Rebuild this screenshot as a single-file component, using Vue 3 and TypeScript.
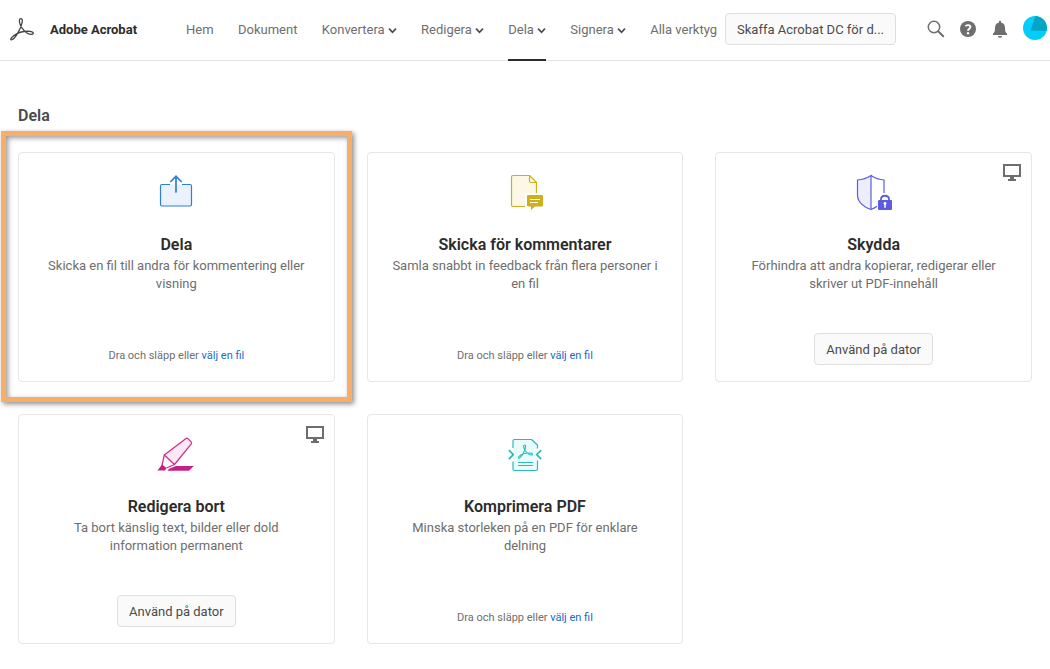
<script setup lang="ts">
interface NavItem {
  label: string
  menu?: boolean
  active?: boolean
}

interface Tool {
  icon: 'share' | 'comment' | 'protect' | 'redact' | 'compress'
  title: string
  text: string
  desktop?: boolean
  highlighted?: boolean
}

const navItems: NavItem[] = [
  { label: 'Hem' },
  { label: 'Dokument' },
  { label: 'Konvertera', menu: true },
  { label: 'Redigera', menu: true },
  { label: 'Dela', menu: true, active: true },
  { label: 'Signera', menu: true },
  { label: 'Alla verktyg' },
]

const tools: Tool[] = [
  { icon: 'share', title: 'Dela', text: 'Skicka en fil till andra för kommentering eller visning', highlighted: true },
  { icon: 'comment', title: 'Skicka för kommentarer', text: 'Samla snabbt in feedback från flera personer i en fil' },
  { icon: 'protect', title: 'Skydda', text: 'Förhindra att andra kopierar, redigerar eller skriver ut PDF-innehåll', desktop: true },
  { icon: 'redact', title: 'Redigera bort', text: 'Ta bort känslig text, bilder eller dold information permanent', desktop: true },
  { icon: 'compress', title: 'Komprimera PDF', text: 'Minska storleken på en PDF för enklare delning' },
]
</script>

<template>
  <div class="page">
    <header class="topbar">
      <a class="brand" href="#">
        <svg class="logo" viewBox="0 0 24 24" aria-hidden="true">
          <path d="M10.6.7C8.6 1 9.2 5.6 11.6 9.400C14 13 18 16.200 21 16.400C24.200 16.500 24 13.600 20 13.300C15 13 8 14.500 4 17.500C0 20.400 .2 22.300 1.900 21.700C5.500 20.300 11.900 9 12.300 3C12.400 1.200 11.700.5 10.600.7Z" />
        </svg>
        <span>Adobe Acrobat</span>
      </a>
      <nav class="nav">
        <a v-for="item in navItems" :key="item.label" href="#" :class="{ active: item.active }">
          {{ item.label }}
          <svg v-if="item.menu" class="chevron" viewBox="0 0 9 6" aria-hidden="true"><path d="M1.500 1.200 4.500 4.300 7.500 1.200" /></svg>
        </a>
      </nav>
      <button class="button promo" type="button">Skaffa Acrobat DC för d...</button>
      <div class="actions">
        <button type="button" aria-label="Sök">
          <svg width="18" height="18" viewBox="0 0 18 18"><circle cx="7" cy="7" r="5.700" fill="none" stroke="#6e6e6e" stroke-width="1.500" /><path d="m11.200 11.200 5 5" stroke="#6e6e6e" stroke-width="2" stroke-linecap="round" /></svg>
        </button>
        <button type="button" aria-label="Hjälp">
          <svg width="18" height="18" viewBox="0 0 18 18"><circle cx="9" cy="9" r="8" fill="#6e6e6e" /><path d="M6.500 6.200C7.200 4.900 11.400 4.500 11.400 7C11.400 8.700 9 8.900 9 10.700" fill="none" stroke="#fff" stroke-width="1.900" /><circle cx="9" cy="13.200" r="1.200" fill="#fff" /></svg>
        </button>
        <button type="button" aria-label="Meddelanden">
          <svg width="18" height="18" viewBox="0 0 18 18" fill="#6e6e6e"><path d="M8 1.600C8 .5 10 .5 10 1.600V2.500C13 3 14 5.300 14 8C14 11.500 14.600 12.500 16 13.600V15H2V13.600C3.400 12.500 4 11.500 4 8C4 5.300 5 3 8 2.500Z" /><path d="M7 16H11C11 18.400 7 18.400 7 16Z" /></svg>
        </button>
        <button class="avatar" type="button" aria-label="Konto">
          <svg width="24" height="24" viewBox="0 0 24 24"><circle cx="12" cy="12" r="12" fill="#05cdfb" /><path d="M12.500 0A12 12 0 0 1 23.500 15L7.500 14.500Z" fill="#04a4c4" /></svg>
        </button>
      </div>
    </header>

    <main class="content">
      <h1>Dela</h1>
      <div class="grid">
        <section v-for="tool in tools" :key="tool.title" class="card" :class="{ highlighted: tool.highlighted }">
          <svg v-if="tool.desktop" class="monitor" viewBox="0 0 18 18" aria-hidden="true"><path d="M0 0H18V13H11V15H13V17H5V15H7V13H0ZM2 2V11H16V2Z" fill="#6e6e6e" fill-rule="evenodd" /></svg>

          <svg class="icon" viewBox="0 0 40 40" fill="none" aria-hidden="true">
            <g v-if="tool.icon === 'share'" stroke="#2f7fd1">
              <path d="M14 13.500H6Q4.500 13.500 4.500 15V33.500Q4.500 35 6 35H34Q35.500 35 35.500 33.500V15Q35.500 13.500 34 13.500H26" fill="#e9f2fe" stroke-width="1.200" />
              <path d="M20 21V6M14.800 10.500 20 5.200 25.200 10.500" stroke-width="1.700" stroke-linecap="round" />
            </g>
            <g v-else-if="tool.icon === 'comment'" stroke="#cdb01c" stroke-linejoin="round">
              <path d="M20 35.500H8Q6.500 35.500 6.500 34V6Q6.500 4.500 8 4.500H24.500L31.500 11.500V22H20Z" fill="#fbf8e8" stroke="none" />
              <path d="M20 35.500H8Q6.500 35.500 6.500 34V6Q6.500 4.500 8 4.500H24.500L31.500 11.500V22M24.500 4.500V10Q24.500 11.500 26 11.500H31.500" stroke-width="1.200" />
              <path d="M23 24H37Q38 24 38 25V34.500Q38 35.500 37 35.500H30L26 39V35.500H23Q22 35.500 22 34.500V25Q22 24 23 24Z" fill="#cdb01c" stroke="none" />
              <path d="M25 28.500H35M25 31.500H33" stroke="#fff" />
            </g>
            <g v-else-if="tool.icon === 'protect'" stroke="#5c5ce0" stroke-width="1.200">
              <path d="M17 4.500Q11 8.500 3.500 9V24C3.500 31 10 36.500 17 38.500Z" fill="#ededfb" />
              <path d="M17 4.500Q23 8.500 30 9V22M17 38.500Q20 37.500 23 35.300" />
              <path d="M27 30V28.500C27 23.500 35 23.500 35 28.500V30" stroke-width="1.800" />
              <rect x="24" y="29" width="14" height="10" rx="1" fill="#5c5ce0" stroke="none" />
              <path d="M31 33V36.800" stroke="#fff" stroke-width="1.500" /><circle cx="31" cy="32.500" r="1.400" fill="#fff" stroke="none" />
            </g>
            <g v-else-if="tool.icon === 'redact'" stroke="#cc2a8b" stroke-width="1.200" stroke-linejoin="round">
              <path d="M30 5.500Q31 4.700 31.900 5.600L35.100 8.800Q36 9.700 35.300 10.800L18.500 31.500 8.300 22Z" fill="#fce8f4" />
              <path d="M8.300 22 6 32.500M18.500 31.500 10.500 35" />
              <path d="M6 31.500 10.500 35 9 37.500H1.500Z" fill="#c81f82" stroke="none" />
              <path d="M11.500 37.800C14 34 16.500 35 20 33H37.800L33 37.800Z" fill="#c81f82" stroke="none" />
            </g>
            <g v-else stroke="#2cb9b9" stroke-width="1.200" stroke-linejoin="round">
              <path d="M8 15V8Q8 6.500 9.500 6.500H26.500L32.500 12V36Q32.500 37.500 31 37.500H9.500Q8 37.500 8 36Z" fill="#eafbfb" stroke="none" />
              <path d="M8 15V8Q8 6.500 9.500 6.500H26.500L32.500 12V15.500M32.500 27.500V36Q32.500 37.500 31 37.500H9.500Q8 37.500 8 36V28.500" />
              <path d="M3.800 17.200 8.300 21.700 3.800 26.200M36.200 17.200 31.700 21.700 36.200 26.200" stroke-width="1.700" />
              <path d="M13 29.500H28M13 32.500H28" />
              <path d="M19.500 12C17.800 12.300 19 16 20.500 18C22.500 20.500 24.500 22 26.500 22C28.300 21.700 27.500 20 25.500 20C21 20 16 21 14 23.500C13 25 13.800 25.700 15 24.700C17.500 22.500 20.500 17 20.600 13.500C20.600 12.400 20.200 11.900 19.500 12Z" stroke-width="1.100" />
            </g>
          </svg>

          <h2>{{ tool.title }}</h2>
          <p class="text">{{ tool.text }}</p>
          <button v-if="tool.desktop" class="button use" type="button">Använd på dator</button>
          <p v-else class="drop">Dra och släpp eller <a href="#">välj en fil</a></p>
        </section>
      </div>
    </main>
  </div>
</template>

<style>
body {
  margin: 0;
  background: #fff;
}
</style>

<style scoped>
.page {
  font-family: Roboto, "Noto Sans", sans-serif;
  font-size: 13px;
  line-height: 18px;
  color: #6e6e6e;
}

button {
  font: inherit;
  cursor: pointer;
}

a {
  text-decoration: none;
}

.topbar {
  display: flex;
  align-items: center;
  height: 60px;
  padding: 0 3px 0 10px;
  border-bottom: 1px solid #e4e4e4;
}

.brand {
  display: flex;
  align-items: center;
  flex: 0 0 176px;
  gap: 16px;
  color: #2c2c2c;
  font-weight: 700;
}

.logo {
  width: 24px;
  height: 24px;
  fill: none;
  stroke: #444;
  stroke-width: 1.3;
}

.nav {
  display: flex;
  flex: 1;
  align-self: stretch;
  justify-content: space-between;
  white-space: nowrap;
}

.nav a {
  display: flex;
  align-items: center;
  gap: 3px;
  height: 58px;
  padding-top: 1px;
  border-bottom: 2px solid transparent;
  color: #6e6e6e;
}

.nav a.active {
  border-bottom-color: #2c2c2c;
}

.chevron {
  width: 9px;
  height: 6px;
  margin-top: 2px;
  fill: none;
  stroke: #4b4b4b;
  stroke-width: 1.7;
  stroke-linecap: round;
}

.button {
  box-sizing: border-box;
  height: 32px;
  padding: 2px 11px 0;
  border: 1px solid #dedede;
  border-radius: 4px;
  background: #fafafa;
  color: #4b4b4b;
  white-space: nowrap;
}

.promo {
  flex: 0 0 170px;
  margin: 0 31px 2px 8px;
}

.actions {
  display: flex;
  align-items: center;
  gap: 14px;
  padding-bottom: 2px;
}

.actions button {
  display: flex;
  padding: 0;
  border: 0;
  background: none;
}

.actions .avatar {
  margin-bottom: 2px;
}

.content {
  padding: 43px 18px 24px;
}

h1 {
  margin: 0 0 24px;
  color: #4b4b4b;
  font-size: 16px;
  font-weight: 600;
  line-height: 24px;
}

.grid {
  display: grid;
  grid-template-columns: repeat(3, 1fr);
  gap: 32px;
}

.card {
  position: relative;
  display: flex;
  flex-direction: column;
  align-items: center;
  box-sizing: border-box;
  min-height: 230px;
  padding: 18px 24px 16px;
  border: 1px solid #e6e6e6;
  border-radius: 4px;
  text-align: center;
}

.card.highlighted::after {
  content: "";
  position: absolute;
  inset: -22px -18px -21px;
  border: 5px solid #f7ae69;
  box-shadow: 2px 2px 5px rgba(0, 0, 0, 0.45), inset 2px 2px 5px rgba(0, 0, 0, 0.4);
  pointer-events: none;
}

.icon {
  width: 40px;
  height: 40px;
}

.monitor {
  position: absolute;
  top: 11px;
  right: 10px;
  width: 18px;
  height: 18px;
}

h2 {
  margin: 22px 0 0;
  color: #2c2c2c;
  font-size: 16px;
  font-weight: 600;
  line-height: 24px;
}

.text {
  margin: 0;
}

.drop {
  margin: auto 0 0;
  font-size: 11px;
  line-height: 18px;
}

.drop a {
  color: #1469d6;
}

.use {
  margin-top: auto;
}
</style>
